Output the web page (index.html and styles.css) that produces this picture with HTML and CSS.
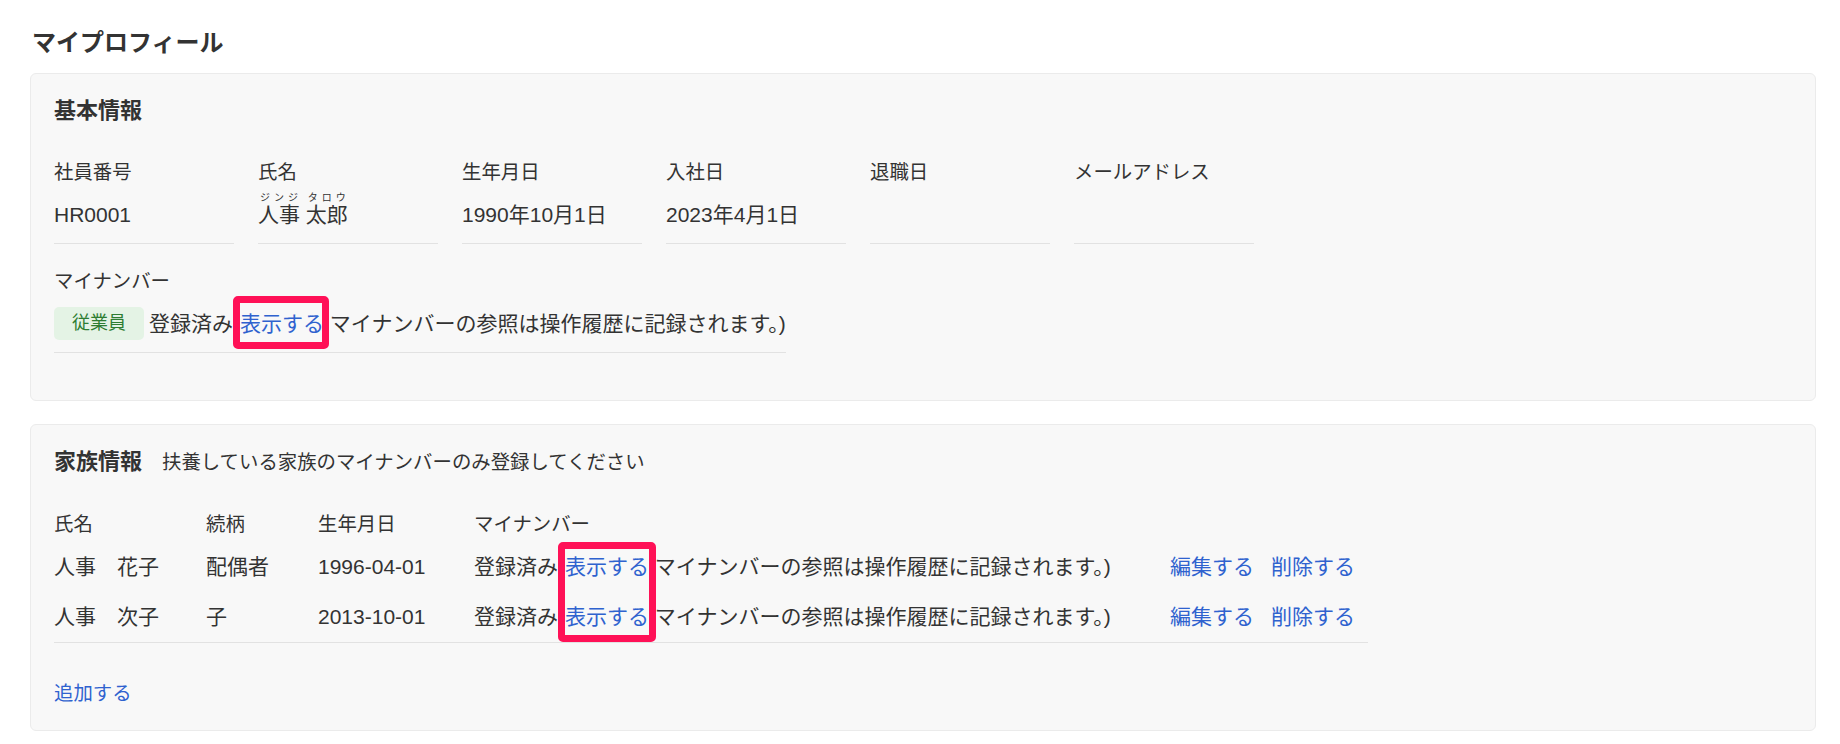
FILE: index.html
```html
<!DOCTYPE html>
<html lang="ja">
<head>
<meta charset="utf-8">
<title>マイプロフィール</title>
<link rel="stylesheet" href="styles.css">
</head>
<body>
<main class="page">
  <h1 class="page-title">マイプロフィール</h1>

  <section class="card basic">
    <h2 class="card-title">基本情報</h2>
    <div class="fields">
      <div class="field">
        <div class="field-label">社員番号</div>
        <div class="field-value">HR0001</div>
      </div>
      <div class="field">
        <div class="field-label">氏名</div>
        <div class="field-value"><span><ruby>人事<rt>ジンジ</rt></ruby>&nbsp;<ruby>太郎<rt>タロウ</rt></ruby></span></div>
      </div>
      <div class="field">
        <div class="field-label">生年月日</div>
        <div class="field-value">1990年10月1日</div>
      </div>
      <div class="field">
        <div class="field-label">入社日</div>
        <div class="field-value">2023年4月1日</div>
      </div>
      <div class="field">
        <div class="field-label">退職日</div>
        <div class="field-value"></div>
      </div>
      <div class="field">
        <div class="field-label">メールアドレス</div>
        <div class="field-value"></div>
      </div>
    </div>
    <div class="field field-mynumber">
      <div class="field-label">マイナンバー</div>
      <div class="field-value">
        <span class="badge">従業員</span>
        <span>登録済み(<a class="link marked" href="#">表示する</a> マイナンバーの参照は操作履歴に記録されます。)</span>
      </div>
    </div>
  </section>

  <section class="card family">
    <div class="card-head">
      <h2 class="card-title">家族情報</h2>
      <span class="card-sub">扶養している家族のマイナンバーのみ登録してください</span>
    </div>
    <div class="table">
      <div class="row row-head">
        <div>氏名</div>
        <div>続柄</div>
        <div>生年月日</div>
        <div>マイナンバー</div>
        <div></div>
      </div>
      <div class="row">
        <div>人事　花子</div>
        <div>配偶者</div>
        <div>1996-04-01</div>
        <div>登録済み(<a class="link" href="#">表示する</a> マイナンバーの参照は操作履歴に記録されます。)</div>
        <div class="actions"><a class="link" href="#">編集する</a><a class="link" href="#">削除する</a></div>
      </div>
      <div class="row">
        <div>人事　次子</div>
        <div>子</div>
        <div>2013-10-01</div>
        <div>登録済み(<a class="link" href="#">表示する</a> マイナンバーの参照は操作履歴に記録されます。)</div>
        <div class="actions"><a class="link" href="#">編集する</a><a class="link" href="#">削除する</a></div>
      </div>
      <div class="highlight"></div>
    </div>
    <a class="link add" href="#">追加する</a>
  </section>
</main>
</body>
</html>
```

FILE: styles.css
```css
* {
  box-sizing: border-box;
}

html, body {
  margin: 0;
  padding: 0;
  background: #ffffff;
}

body {
  font-family: "Liberation Sans", "Noto Sans CJK JP", sans-serif;
  font-size: 21px;
  line-height: 30px;
  color: #333333;
}

.page {
  padding: 25px 24px 0 30px;
}

.page-title {
  margin: 0 0 12px 2px;
  font-size: 24px;
  line-height: 36px;
  font-weight: 700;
  color: #333333;
}

.card {
  background: #f8f8f8;
  border: 1px solid #ebebeb;
  border-radius: 6px;
  padding: 20px 23px 47px;
}

.card-title {
  margin: 0;
  font-size: 22px;
  line-height: 33px;
  font-weight: 700;
  color: #333333;
}

.basic .card-title {
  margin-bottom: 30px;
}

.fields {
  display: grid;
  grid-template-columns: repeat(6, 180px);
  column-gap: 24px;
}

.field-label {
  font-size: 19.4px;
  line-height: 30px;
}

.field-value {
  margin-top: 11px;
  height: 33px;
  line-height: 33px;
  display: flex;
  align-items: flex-end;
  padding-bottom: 12px;
  box-sizing: content-box;
  border-bottom: 1px solid #e2e2e2;
  white-space: nowrap;
}

.field-mynumber {
  width: fit-content;
  margin-top: 22px;
}

ruby {
  ruby-position: over;
}

rt {
  font-size: 10px;
  line-height: 10px;
  color: #333333;
}

.badge {
  display: inline-block;
  width: 90px;
  height: 33px;
  line-height: 33px;
  text-align: center;
  font-size: 18px;
  color: #2e7d32;
  background: #e4f3e5;
  border-radius: 5px;
  margin-right: 5px;
}

.link {
  color: #2f62cf;
  text-decoration: none;
}

.marked {
  position: relative;
}

.marked::after {
  content: "";
  position: absolute;
  left: -7px;
  right: -5px;
  top: -16px;
  bottom: -14px;
  border: 7px solid #ff1157;
  border-radius: 5px;
}

.family {
  margin-top: 23px;
  padding-bottom: 22px;
}

.card-head {
  display: flex;
  align-items: baseline;
  gap: 20px;
}

.card-sub {
  font-size: 19.4px;
}

.table {
  position: relative;
  width: 1314px;
  margin-top: 31px;
  border-bottom: 1px solid #e2e2e2;
}

.row {
  display: grid;
  grid-template-columns: 152px 112px 156px 696px 198px;
  padding: 10px 0;
  white-space: nowrap;
}

.row-head {
  font-size: 19.4px;
  padding: 0 0 3px;
}

.actions {
  display: flex;
  gap: 17px;
}

.highlight {
  position: absolute;
  left: 504px;
  top: 33px;
  width: 98px;
  height: 100px;
  border: 7px solid #ff1157;
  border-radius: 5px;
}

.add {
  display: inline-block;
  margin-top: 35px;
  font-size: 19.4px;
}
```
